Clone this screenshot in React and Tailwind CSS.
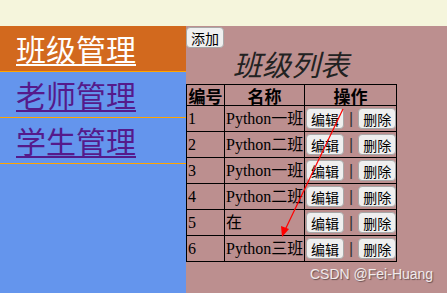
const classes = [
  { id: 1, name: 'Python一班' },
  { id: 2, name: 'Python二班' },
  { id: 3, name: 'Python一班' },
  { id: 4, name: 'Python二班' },
  { id: 5, name: '在' },
  { id: 6, name: 'Python三班' },
];

const menu = [
  { label: '班级管理', active: true },
  { label: '老师管理' },
  { label: '学生管理' },
];

const cjk = "font-['Noto_Sans_CJK_SC',sans-serif]";

const Btn = ({ children }) => (
  <button className={`inline-flex h-[21px] w-[38px] shrink-0 items-center justify-center whitespace-nowrap rounded-[4px] border border-[#a8a8a8] bg-[#efefef] p-0 text-[14px] leading-none text-black ${cjk}`}>
    {children}
  </button>
);

const App = () => {
  return (
    <div className="relative h-[293px] w-[447px] overflow-hidden flex flex-col bg-[#f5f5dc]">
      <div className="h-[26px] shrink-0" />
      <div className="flex flex-1">
        {/* Sidebar */}
        <div className="w-[186px] shrink-0 bg-[#6495ed]">
          {menu.map((m) => (
            <div
              key={m.label}
              className={`h-[46px] border-b border-[#ffa500] pl-[16px] ${m.active ? 'bg-[#d2691e]' : ''}`}
            >
              <a
                href="#"
                className={`text-[30px] leading-[45px] underline underline-offset-[3px] decoration-2 ${cjk} ${m.active ? 'text-white' : 'text-[#551a8b]'}`}
              >
                {m.label}
              </a>
            </div>
          ))}
        </div>

        {/* Main */}
        <div className="flex flex-1 flex-col items-start bg-[#bc8f8f] pt-px">
          <Btn>添加</Btn>
          <div className="w-[210px]">
            <div className={`h-[36px] text-center text-[29px] leading-[31px] italic text-[#222] ${cjk}`}>班级列表</div>
            <table className="table-fixed w-[210px] border-collapse border border-black text-[16px] text-black font-['Liberation_Serif','Noto_Sans_CJK_SC',serif]">
              <colgroup>
                <col className="w-[38px]" />
                <col className="w-[80px]" />
                <col className="w-[92px]" />
              </colgroup>
              <thead>
                <tr className="h-[21px]">
                  <th className={`border border-black p-0 text-[17px] font-bold leading-[19px] ${cjk}`}>编号</th>
                  <th className={`border border-black p-0 text-[17px] font-bold leading-[19px] ${cjk}`}>名称</th>
                  <th className={`border border-black p-0 text-[17px] font-bold leading-[19px] ${cjk}`}>操作</th>
                </tr>
              </thead>
              <tbody>
                {classes.map((c) => (
                  <tr key={c.id} className="h-[26px]">
                    <td className="border border-black px-px py-0 text-left">{c.id}</td>
                    <td className="border border-black px-px py-0 text-left whitespace-nowrap overflow-hidden">{c.name}</td>
                    <td className="border border-black px-px py-0">
                      <div className="flex items-center">
                        <Btn>编辑</Btn>
                        <span className="px-[5px] text-[#333] font-['Liberation_Sans',sans-serif]">|</span>
                        <Btn>删除</Btn>
                      </div>
                    </td>
                  </tr>
                ))}
              </tbody>
            </table>
          </div>
        </div>
      </div>

      {/* annotation arrow */}
      <svg className="absolute left-0 top-0 pointer-events-none" width="447" height="293">
        <line x1="343" y1="109" x2="285" y2="230" stroke="#ff0000" strokeWidth="1.2" />
        <polygon points="282,237 281,226 289,229" fill="#ff0000" />
      </svg>

      {/* watermark */}
      <div className="absolute left-[310px] top-[266px] text-[14px] leading-[17px] text-white/85 font-['Liberation_Sans',sans-serif] [text-shadow:1px_1px_1px_rgba(0,0,0,0.45)]">
        CSDN @Fei-Huang
      </div>
    </div>
  );
};

export default App;
